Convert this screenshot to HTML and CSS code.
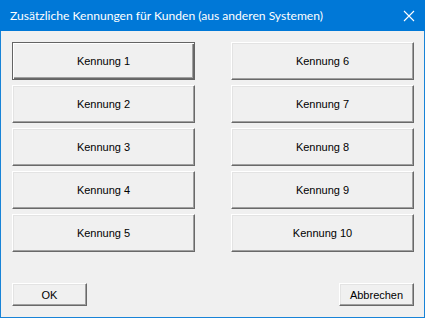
FILE: index.html
```html
<!DOCTYPE html>
<html lang="de">
<head>
    <meta charset="UTF-8">
    <title>Zusätzliche Kennungen</title>
    <link rel="stylesheet" href="styles.css">
</head>
<body>

<div class="window">
    <div class="titlebar">
        <span class="title">Zusätzliche Kennungen für Kunden (aus anderen Systemen)</span>
        <span class="close">
            <svg width="12" height="12" viewBox="0 0 12 12">
                <path d="M1 1 L11 11 M11 1 L1 11" stroke="#fff" stroke-width="1.1" fill="none"/>
            </svg>
        </span>
    </div>

    <div class="content">
        <div class="grid">
            <button class="btn big default">Kennung 1</button>
            <button class="btn big">Kennung 6</button>
            <button class="btn big">Kennung 2</button>
            <button class="btn big">Kennung 7</button>
            <button class="btn big">Kennung 3</button>
            <button class="btn big">Kennung 8</button>
            <button class="btn big">Kennung 4</button>
            <button class="btn big">Kennung 9</button>
            <button class="btn big">Kennung 5</button>
            <button class="btn big">Kennung 10</button>
        </div>

        <div class="footer">
            <button class="btn small">OK</button>
            <button class="btn small">Abbrechen</button>
        </div>
    </div>
</div>

</body>
</html>
```

FILE: styles.css
```css
body {
    margin: 0;
    background: #f0f0f0;
}

.window {
    width: 425px;
    height: 318px;
    box-sizing: border-box;
    border: 1px solid #1883d7;
    border-top: none;
    background: #f0f0f0;
    display: flex;
    flex-direction: column;
}

.titlebar {
    height: 31px;
    margin: 0 -1px;
    background: #0078d7;
    color: #fff;
    display: flex;
    align-items: center;
    justify-content: space-between;
    padding: 0 10px 0 10px;
    font-family: Lato, "Noto Sans", sans-serif;
    font-size: 12.1px;
}

.title {
    padding-bottom: 1px;
}

.close {
    display: flex;
    width: 12px;
    height: 12px;
}

.content {
    flex: 1;
    padding: 11px 10px 0 11px;
    display: flex;
    flex-direction: column;
}

.grid {
    display: grid;
    grid-template-columns: 183px 183px;
    grid-auto-rows: 38px;
    column-gap: 36px;
    row-gap: 5px;
}

.btn {
    font-family: "Liberation Sans", Arial, sans-serif;
    font-size: 11px;
    color: #000;
    background: #f0f0f0;
    border: 1px solid;
    border-color: #ffffff #696969 #696969 #ffffff;
    box-shadow: inset -1px -1px #a0a0a0, inset 1px 1px #e3e3e3;
    padding: 0;
    margin: 0;
}

.default {
    border-color: #646464;
    box-shadow: inset 1px 1px #ffffff, inset -1px -1px #696969, inset -2px -2px #a0a0a0;
}

.footer {
    margin-top: 31px;
    display: flex;
    justify-content: space-between;
}

.small {
    width: 75px;
    height: 23px;
}
```
